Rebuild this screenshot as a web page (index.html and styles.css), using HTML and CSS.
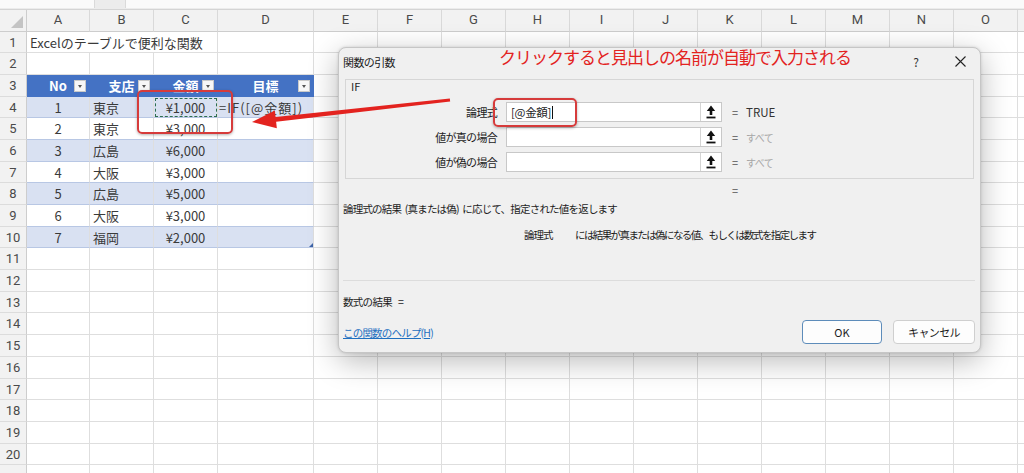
FILE: index.html
```html
<!DOCTYPE html>
<html lang="ja">
<head>
<meta charset="utf-8">
<title>関数の引数</title>
<link rel="stylesheet" href="styles.css">
</head>
<body>
<div class="topbar">
  <div class="tb-name"></div>
  <div class="tb-gap"></div>
  <div class="tb-formula"></div>
</div>
<div class="sheet">
  <div class="corner"></div>
  <div class="ch">A</div><div class="ch">B</div><div class="ch">C</div><div class="ch">D</div>
  <div class="ch">E</div><div class="ch">F</div><div class="ch">G</div><div class="ch">H</div>
  <div class="ch">I</div><div class="ch">J</div><div class="ch">K</div><div class="ch">L</div>
  <div class="ch">M</div><div class="ch">N</div><div class="ch">O</div><div class="ch"></div>

  <div class="rh">1</div><div class="c span3">Excelのテーブルで便利な関数</div><div class="c"></div><div class="rest"></div>
  <div class="rh">2</div><div class="c"></div><div class="c"></div><div class="c"></div><div class="c"></div><div class="rest"></div>

  <div class="rh">3</div>
  <div class="c hd">No<span class="dd"></span></div>
  <div class="c hd">支店<span class="dd"></span></div>
  <div class="c hd">金額<span class="dd"></span></div>
  <div class="c hd">目標<span class="dd"></span></div>
  <div class="rest"></div>

  <div class="rh">4</div><div class="c t band ctr">1</div><div class="c t band">東京</div><div class="c t band ctr marquee">¥1,000</div><div class="c t band formula">=IF([@金額])</div><div class="rest"></div>
  <div class="rh">5</div><div class="c t ctr">2</div><div class="c t">東京</div><div class="c t ctr">¥3,000</div><div class="c t"></div><div class="rest"></div>
  <div class="rh">6</div><div class="c t band ctr">3</div><div class="c t band">広島</div><div class="c t band ctr">¥6,000</div><div class="c t band"></div><div class="rest"></div>
  <div class="rh">7</div><div class="c t ctr">4</div><div class="c t">大阪</div><div class="c t ctr">¥3,000</div><div class="c t"></div><div class="rest"></div>
  <div class="rh">8</div><div class="c t band ctr">5</div><div class="c t band">広島</div><div class="c t band ctr">¥5,000</div><div class="c t band"></div><div class="rest"></div>
  <div class="rh">9</div><div class="c t ctr">6</div><div class="c t">大阪</div><div class="c t ctr">¥3,000</div><div class="c t"></div><div class="rest"></div>
  <div class="rh">10</div><div class="c t band ctr">7</div><div class="c t band">福岡</div><div class="c t band ctr">¥2,000</div><div class="c t band last"><span class="handle"></span></div><div class="rest"></div>

  <div class="rh">11</div><div class="c"></div><div class="c"></div><div class="c"></div><div class="c"></div><div class="rest"></div>
  <div class="rh">12</div><div class="c"></div><div class="c"></div><div class="c"></div><div class="c"></div><div class="rest"></div>
  <div class="rh">13</div><div class="c"></div><div class="c"></div><div class="c"></div><div class="c"></div><div class="rest"></div>
  <div class="rh">14</div><div class="c"></div><div class="c"></div><div class="c"></div><div class="c"></div><div class="rest"></div>
  <div class="rh">15</div><div class="c"></div><div class="c"></div><div class="c"></div><div class="c"></div><div class="rest"></div>
  <div class="rh">16</div><div class="c"></div><div class="c"></div><div class="c"></div><div class="c"></div><div class="rest"></div>
  <div class="rh">17</div><div class="c"></div><div class="c"></div><div class="c"></div><div class="c"></div><div class="rest"></div>
  <div class="rh">18</div><div class="c"></div><div class="c"></div><div class="c"></div><div class="c"></div><div class="rest"></div>
  <div class="rh">19</div><div class="c"></div><div class="c"></div><div class="c"></div><div class="c"></div><div class="rest"></div>
  <div class="rh">20</div><div class="c"></div><div class="c"></div><div class="c"></div><div class="c"></div><div class="rest"></div>
  <div class="rh"></div><div class="c"></div><div class="c"></div><div class="c"></div><div class="c"></div><div class="rest"></div>
</div>

<div class="dialog">
  <div class="d-title">
    <span class="ttl">関数の引数</span>
    <span class="d-help">?</span>
    <span class="d-close"><svg width="11" height="11" viewBox="0 0 11 11"><path d="M0.5 0.5 L10.5 10.5 M10.5 0.5 L0.5 10.5" stroke="#222" stroke-width="1.1" fill="none"/></svg></span>
  </div>
  <div class="d-body">
    <div class="group">
      <div class="g-name">IF</div>
      <div class="arg">
        <span class="lbl">論理式</span>
        <span class="inp"><span class="inp-text">[@金額]<span class="caret"></span></span><span class="inp-btn"><svg width="10" height="14" viewBox="0 0 10 14"><path d="M5 0.5 L9.2 6 H6.3 V10 H3.7 V6 H0.8 Z" fill="#111"/><rect x="0.5" y="11.6" width="9" height="1.8" fill="#111"/></svg></span></span>
        <span class="eq">=</span><span class="val">TRUE</span>
      </div>
      <div class="arg">
        <span class="lbl">値が真の場合</span>
        <span class="inp"><span class="inp-text"></span><span class="inp-btn"><svg width="10" height="14" viewBox="0 0 10 14"><path d="M5 0.5 L9.2 6 H6.3 V10 H3.7 V6 H0.8 Z" fill="#111"/><rect x="0.5" y="11.6" width="9" height="1.8" fill="#111"/></svg></span></span>
        <span class="eq">=</span><span class="val dim">すべて</span>
      </div>
      <div class="arg">
        <span class="lbl">値が偽の場合</span>
        <span class="inp"><span class="inp-text"></span><span class="inp-btn"><svg width="10" height="14" viewBox="0 0 10 14"><path d="M5 0.5 L9.2 6 H6.3 V10 H3.7 V6 H0.8 Z" fill="#111"/><rect x="0.5" y="11.6" width="9" height="1.8" fill="#111"/></svg></span></span>
        <span class="eq">=</span><span class="val dim">すべて</span>
      </div>
    </div>
    <div class="eqline">=</div>
    <div class="desc">論理式の結果 (真または偽) に応じて、指定された値を返します</div>
    <div class="desc2"><span class="d2-name">論理式</span><span class="d2-text">には結果が真または偽になる値、もしくは数式を指定します</span></div>
    <div class="sep"></div>
    <div class="result">数式の結果<span class="res-eq">=</span></div>
    <div class="footer">
      <a class="help">この関数のヘルプ(H)</a>
      <span class="btn ok">OK</span>
      <span class="btn cancel">キャンセル</span>
    </div>
  </div>
</div>

<div class="note">クリックすると見出しの名前が自動で入力される</div>
<div class="hl hl-cell"></div>
<div class="hl hl-input"></div>
<svg class="arrow" width="220" height="50" viewBox="0 0 220 50">
  <polygon points="12,37 36.85,43.3 36.12,36.74 210.18,16.59 209.82,13.41 35.6,31.96 34.87,25.4" fill="#e3231f"/>
</svg>
</body>
</html>
```

FILE: styles.css
```css
* { box-sizing: border-box; margin: 0; padding: 0; }
html, body { width: 1024px; height: 473px; overflow: hidden; }
body {
  background: #fff;
  font-family: "Noto Sans CJK JP", "Noto Sans", sans-serif;
  color: #333;
  position: relative;
}

/* top strip (bottom of formula bar) */
.topbar {
  height: 10px;
  display: flex;
  background: #ececec;
  border-bottom: 1px solid #d4d4d4;
}
.tb-name { width: 95px; height: 8px; background: #fafafa; border-right: 1px solid #dadada; }
.tb-gap { width: 30px; }
.tb-formula { flex: 1; height: 8px; background: #fafafa; border-left: 1px solid #dadada; }

/* worksheet grid */
.sheet {
  display: grid;
  grid-template-columns: 27px 63px 64px 64px 96px repeat(12, 64px);
  grid-template-rows: 21.5px;
  grid-auto-rows: 21.7px;
}
.corner {
  background: #f2f2f2;
  border-right: 1px solid #cdcdcd;
  border-bottom: 1px solid #cdcdcd;
  position: relative;
}
.corner::after {
  content: "";
  position: absolute;
  right: 3px;
  bottom: 3px;
  border-style: solid;
  border-width: 0 0 12px 12px;
  border-color: transparent transparent #c4c4c4 transparent;
}
.ch {
  background: #f2f2f2;
  border-right: 1px solid #d9d9d9;
  border-bottom: 1px solid #cdcdcd;
  font: 13px/20px "Liberation Sans Narrow", "Roboto", sans-serif;
  text-align: center;
  color: #4a4a4a;
}
.rh {
  background: #f2f2f2;
  border-right: 1px solid #cdcdcd;
  border-bottom: 1px solid #dcdcdc;
  font: 13px/21px "Liberation Sans Narrow", "Roboto", sans-serif;
  text-align: center;
  color: #4a4a4a;
}
.c {
  border-right: 1px solid #dedede;
  border-bottom: 1px solid #dedede;
  font-size: 13px;
  line-height: 21px;
  white-space: nowrap;
  padding: 0 3px;
  color: #3a3a3a;
  position: relative;
}
.span3 { grid-column: span 3; }
.rest {
  grid-column: 6 / -1;
  border-bottom: 1px solid #dedede;
  background: repeating-linear-gradient(to right, transparent 0 63px, #dedede 63px 64px);
}

/* excel table */
.hd {
  background: #4472c4;
  color: #fff;
  font-weight: bold;
  text-align: center;
  border-right-color: #4472c4;
  border-bottom-color: #4472c4;
}
.dd {
  position: absolute;
  right: 3px;
  top: 5px;
  width: 12px;
  height: 12px;
  background: #f7f7f7;
  border: 1px solid #c9c9c9;
}
.dd::after {
  content: "";
  position: absolute;
  left: 3px;
  top: 4px;
  border-style: solid;
  border-width: 3px 2.5px 0 2.5px;
  border-color: #555 transparent transparent transparent;
}
.t { border-bottom-color: #b8c7e4; }
.band { background: #d9e1f2; }
.ctr { text-align: center; }
.formula { padding-left: 1px; letter-spacing: 1px; overflow: visible; }
.marquee {
  outline: 1.5px dashed #2d6e4f;
  outline-offset: -2px;
}
.handle {
  position: absolute;
  right: 0;
  bottom: 0;
  border-style: solid;
  border-width: 0 0 4px 4px;
  border-color: transparent transparent #3e64a8 transparent;
}

/* dialog */
.dialog {
  position: absolute;
  left: 338px;
  top: 47px;
  width: 643px;
  background: #f0f0f0;
  border: 1px solid #c6c6c6;
  border-radius: 8px;
  box-shadow: 0 8px 30px rgba(0,0,0,0.28), 0 0 3px rgba(0,0,0,0.15);
  padding-bottom: 8px;
  font-size: 11px;
  color: #1c1c1c;
}
.d-title {
  height: 27px;
  display: flex;
  align-items: center;
  padding-left: 4px;
}
.ttl { flex: 1; letter-spacing: -0.6px; font-size: 11px; }
.d-help { width: 10px; text-align: center; margin-right: 32px; font-size: 12px; color: #333; }
.d-close { width: 14px; height: 14px; margin-right: 13px; display: flex; align-items: center; justify-content: center; }
.d-body { padding: 0 4px 0 4px; }

.group {
  margin: 4px 2px 0 2px;
  border: 1px solid #d6d6d6;
  padding: 0 0 6px 0;
}
.g-name { line-height: 12px; height: 12px; padding-left: 5px; font-size: 11px; }
.arg {
  display: flex;
  align-items: center;
  height: 20px;
  margin-top: 5px;
}
.g-name + .arg { margin-top: 10px; }
.lbl {
  width: 151px;
  text-align: right;
  letter-spacing: -0.7px;
  font-size: 11px;
}
.inp {
  margin-left: 9px;
  width: 216px;
  height: 20px;
  background: #fff;
  border: 1px solid #c8c8c8;
  display: flex;
}
.inp-text {
  flex: 1;
  padding-left: 4px;
  line-height: 18px;
  font-size: 11.5px;
  letter-spacing: -0.3px;
  color: #222;
  display: flex;
  align-items: center;
}
.caret { width: 1px; height: 13px; background: #111; margin-left: 1px; }
.inp-btn {
  width: 21px;
  border-left: 1px solid #d4d4d4;
  display: flex;
  align-items: center;
  justify-content: center;
}
.eq { width: 10px; margin-left: 8px; text-align: center; color: #555; }
.val { margin-left: 6px; font-size: 11.5px; color: #333; }
.dim { color: #a6a6a6; font-size: 10px; letter-spacing: -0.6px; }

.eqline { margin-top: 3px; height: 16px; line-height: 16px; padding-left: 389px; color: #555; }
.desc { margin-top: 3px; height: 16px; line-height: 16px; letter-spacing: -0.8px; font-size: 10.5px; word-spacing: 2px; }
.desc2 { margin-top: 10px; height: 16px; line-height: 16px; padding-left: 181px; font-size: 10.5px; letter-spacing: -1.6px; display: flex; }
.d2-name { width: 51px; letter-spacing: -1px; }
.sep { margin: 37px 1px 0 0; border-top: 1px solid #dcdcdc; }
.result { margin-top: 13px; height: 16px; line-height: 16px; letter-spacing: -0.7px; font-size: 10.5px; }
.res-eq { margin-left: 6px; }
.footer {
  margin-top: 10px;
  height: 24px;
  display: flex;
  align-items: center;
}
.help {
  flex: 1;
  color: #1e6fc0;
  text-decoration: underline;
  font-size: 10.5px;
  letter-spacing: -0.8px;
}
.btn {
  height: 24px;
  background: #fdfdfd;
  border: 1px solid #cfcfcf;
  border-radius: 4px;
  display: flex;
  align-items: center;
  justify-content: center;
  font-size: 11px;
  color: #1c1c1c;
}
.ok { width: 80px; border-color: #5d8cba; }
.cancel { width: 82px; margin-left: 11px; margin-right: 1px; letter-spacing: -0.6px; }

/* annotations */
.note {
  position: absolute;
  left: 499px;
  top: 46px;
  font-size: 17px;
  line-height: 22px;
  letter-spacing: -1px;
  color: #e3231f;
  white-space: nowrap;
}
.hl {
  position: absolute;
  border: 2px solid #d63b3b;
  border-radius: 5px;
  box-shadow: 0 1px 3px rgba(0,0,0,0.3);
}
.hl-cell { left: 137px; top: 90px; width: 96px; height: 44px; }
.hl-input { left: 493px; top: 98px; width: 84px; height: 29px; }
.arrow { position: absolute; left: 240px; top: 85px; }
```
